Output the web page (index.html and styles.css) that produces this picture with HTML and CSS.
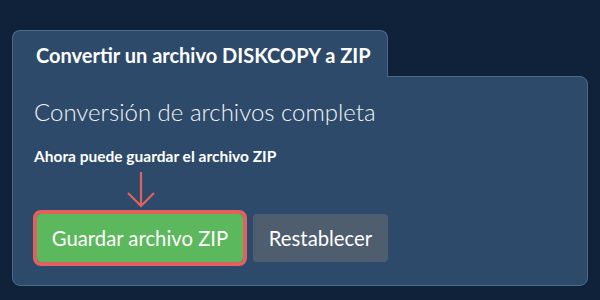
FILE: index.html
```html
<!DOCTYPE html>
<html lang="es">
<head>
<meta charset="utf-8">
<link rel="stylesheet" href="styles.css">
</head>
<body>
<div class="card">
  <div class="tab">Convertir un archivo DISKCOPY a ZIP</div>
  <div class="panel">
    <h2 class="heading">Conversión de archivos completa</h2>
    <p class="note">Ahora puede guardar el archivo ZIP</p>
    <div class="pointer">
      <svg width="30" height="36" viewBox="0 0 30 36"><path d="M15 0 V34 M2 21 L15 34 L28 21" fill="none" stroke="#e0625e" stroke-width="2.2"/></svg>
    </div>
    <div class="actions">
      <button class="btn btn-save">Guardar archivo ZIP</button>
      <button class="btn btn-reset">Restablecer</button>
    </div>
  </div>
</div>
</body>
</html>
```
FILE: styles.css
```css
html, body { margin: 0; padding: 0; }
body {
  background: #10223a;
  width: 600px;
  height: 300px;
  overflow: hidden;
  font-family: Lato, "Liberation Sans", sans-serif;
  color: #ffffff;
}
.card {
  padding: 30px 12px 0 12px;
}
.tab {
  position: relative;
  z-index: 1;
  display: inline-block;
  box-sizing: border-box;
  width: 376px;
  height: 47px;
  margin-bottom: -1px;
  padding: 12px 0 0 23px;
  background: #2d4a6a;
  border: 1px solid #4a6a8d;
  border-bottom: none;
  border-radius: 8px 8px 0 0;
  font-size: 20px;
  font-weight: 700;
  line-height: 24px;
  vertical-align: top;
}
.panel {
  box-sizing: border-box;
  width: 576px;
  height: 210px;
  background: #2d4a6a;
  border: 1px solid #4a6a8d;
  border-radius: 0 8px 8px 8px;
  padding: 20px 20px 0 21px;
}
.heading {
  margin: 0;
  font-size: 24px;
  font-weight: 300;
  line-height: 30px;
  color: #f2f4f7;
}
.note {
  margin: 20px 0 0 0;
  font-size: 15.5px;
  font-weight: 700;
  line-height: 18px;
}
.pointer {
  margin: 7px 0 0 92px;
  height: 36px;
}
.pointer svg { display: block; }
.actions {
  display: flex;
  align-items: center;
  gap: 10px;
  margin-top: 6px;
  padding-left: 3px;
}
.btn {
  font-family: Lato, "Liberation Sans", sans-serif;
  font-size: 20.3px;
  font-weight: 400;
  color: #ffffff;
  height: 48px;
  border: none;
  border-radius: 4px;
  padding: 0;
  line-height: 48px;
  text-align: center;
}
.btn-save {
  width: 206px;
  background: #5cb85c;
  outline: 4px solid #e0625e;
  outline-offset: 0;
}
.btn-reset {
  width: 135px;
  background: #4e5e6f;
}
```
